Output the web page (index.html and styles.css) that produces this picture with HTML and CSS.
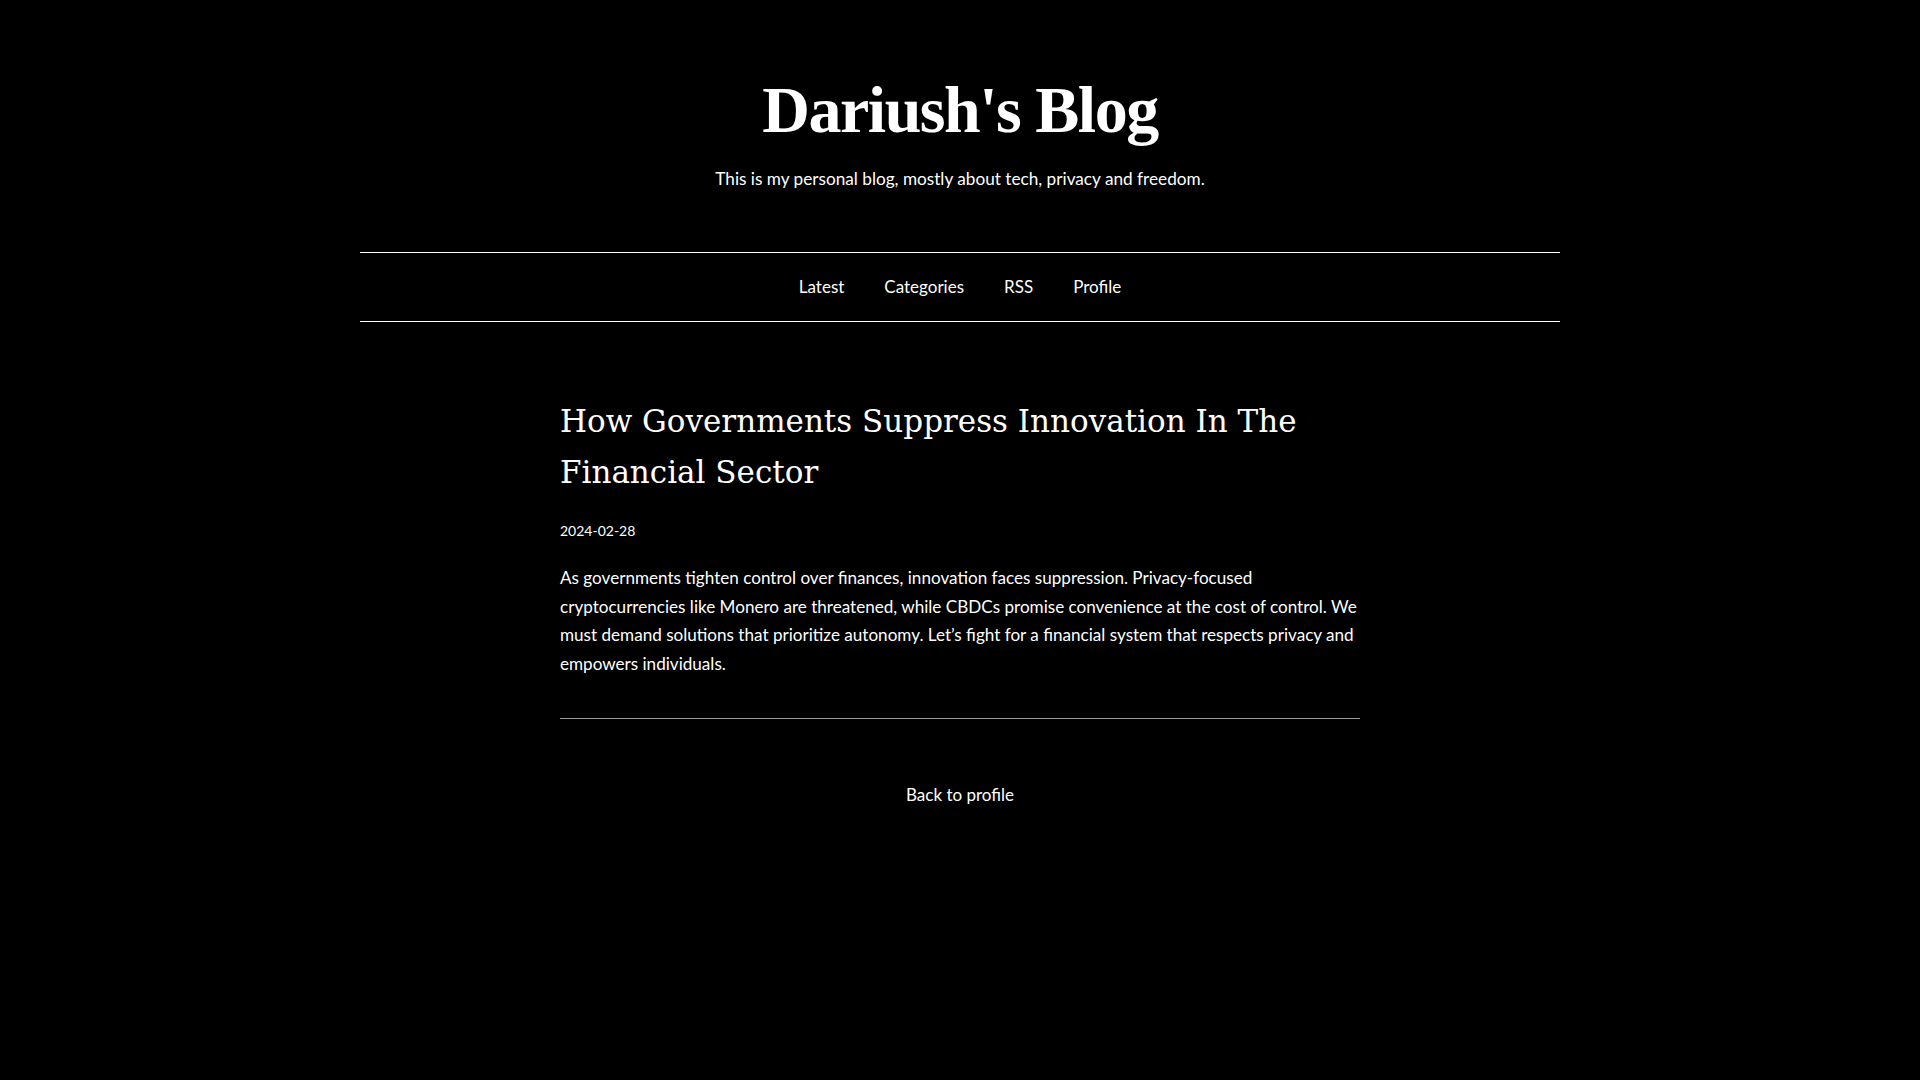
FILE: index.html
```html
<!DOCTYPE html>
<html lang="en">
<head>
<meta charset="utf-8">
<title>Dariush's Blog</title>
<link rel="stylesheet" href="styles.css">
</head>
<body>
<header class="site-header">
  <h1 class="site-title">Dariush's Blog</h1>
  <p class="tagline">This is my personal blog, mostly about tech, privacy and freedom.</p>
</header>
<nav class="site-nav">
  <ul class="nav-list">
    <li><a href="#">Latest</a></li>
    <li><a href="#">Categories</a></li>
    <li><a href="#">RSS</a></li>
    <li><a href="#">Profile</a></li>
  </ul>
</nav>
<main class="post">
  <h2 class="post-title">How Governments Suppress Innovation In The Financial Sector</h2>
  <p class="post-date">2024-02-28</p>
  <p class="post-body">As governments tighten control over finances, innovation faces suppression. Privacy-focused cryptocurrencies like Monero are threatened, while CBDCs promise convenience at the cost of control. We must demand solutions that prioritize autonomy. Let’s fight for a financial system that respects privacy and empowers individuals.</p>
  <hr class="post-rule">
  <p class="back"><a href="#">Back to profile</a></p>
</main>
</body>
</html>
```

FILE: styles.css
```css
html, body {
  margin: 0;
  padding: 0;
  background: #000;
  color: #fff;
}
body {
  font-family: Lato, "Liberation Sans", sans-serif;
  font-size: 17px;
}
a {
  color: #fff;
  text-decoration: none;
}
.site-header {
  text-align: center;
  padding-top: 70px;
}
.site-title {
  margin: 0;
  font-family: "Liberation Serif", serif;
  font-weight: bold;
  font-size: 66px;
  line-height: 1.2;
  letter-spacing: -1.5px;
}
.tagline {
  margin: 16px 0 0;
  font-size: 17.2px;
  line-height: 27px;
}
.site-nav {
  width: 1200px;
  margin: 60px auto 0;
  border-top: 1px solid #fff;
  border-bottom: 1px solid #fff;
}
.nav-list {
  list-style: none;
  margin: 0;
  padding: 20px 0;
  display: flex;
  justify-content: center;
  gap: 40px;
  line-height: 28px;
  font-size: 17px;
}
.post {
  width: 800px;
  margin: 74px auto 0;
}
.post-title {
  margin: 0;
  font-family: "DejaVu Serif", serif;
  font-weight: normal;
  font-size: 31px;
  line-height: 51px;
}
.post-date {
  margin: 21px 0 0;
  font-size: 14px;
  line-height: 24px;
}
.post-body {
  margin: 21px 0 0;
  font-size: 17.1px;
  line-height: 28.5px;
}
.post-rule {
  margin: 40px 0 0;
  border: 0;
  border-top: 1px solid #999;
  height: 0;
}
.back {
  margin: 62px 0 0;
  text-align: center;
  line-height: 27px;
}
```
